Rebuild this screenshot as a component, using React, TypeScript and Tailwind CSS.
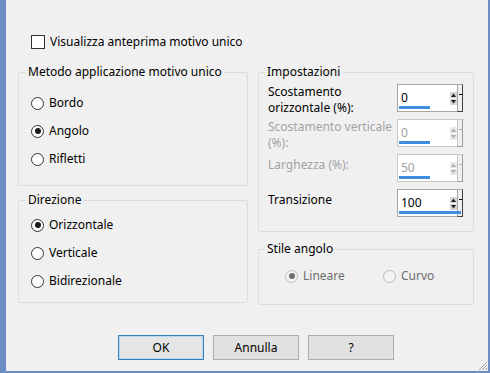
import React from 'react';

const font = { fontFamily: '"Segoe UI", "Noto Sans", Arial, sans-serif' };

const Radio: React.FC<{ label: string; checked?: boolean; disabled?: boolean }> = ({ label, checked, disabled }) => (
  <label className="flex items-center h-[16px] gap-[5px]">
    <span
      className={`w-[13px] h-[13px] rounded-full border flex items-center justify-center ${
        disabled ? 'border-[#bcbcbc] bg-[#f4f4f4]' : 'border-[#333333] bg-white'
      }`}
    >
      {checked && <span className={`w-[6px] h-[6px] rounded-full ${disabled ? 'bg-[#707070]' : 'bg-[#1a1a1a]'}`} />}
    </span>
    <span className={disabled ? 'text-[#6d6d6d]' : 'text-black'}>{label}</span>
  </label>
);

const Spin: React.FC<{ value: string; bar: number; disabled?: boolean }> = ({ value, bar, disabled }) => (
  <div className="flex h-[28px] shrink-0">
    <div className={`relative w-[53px] h-full border border-r-0 ${disabled ? 'border-[#c8c8c8]' : 'border-[#a5a5a5]'} bg-white`}>
      <span className={`absolute left-[3px] top-[5px] ${disabled ? 'text-[#a0a0a0]' : 'text-black'}`}>{value}</span>
      <span className="absolute left-[1px] bottom-[2px] h-[3px] bg-[#3d8ee0]" style={{ width: bar }} />
    </div>
    <div className={`w-[7px] h-full border-y ${disabled ? 'border-[#c8c8c8]' : 'border-[#a5a5a5]'} bg-white flex flex-col items-center justify-center gap-[1px]`}>
      <svg width="7" height="6" viewBox="0 0 7 6">
        <rect x="0" y="0" width="7" height="6" fill={disabled ? '#e8e8e8' : '#d4d4d4'} />
        <path d="M1 5 L3.5 1.5 L6 5 Z" fill={disabled ? '#b0b0b0' : '#222'} />
      </svg>
      <svg width="7" height="6" viewBox="0 0 7 6">
        <rect x="0" y="0" width="7" height="6" fill={disabled ? '#e8e8e8' : '#d4d4d4'} />
        <path d="M1 1 L3.5 4.5 L6 1 Z" fill={disabled ? '#b0b0b0' : '#222'} />
      </svg>
    </div>
    <div className={`w-[6px] h-full border ${disabled ? 'border-[#c8c8c8] border-r-[#9a9a9a] border-b-[#9a9a9a]' : 'border-[#a5a5a5] border-r-[#404040] border-b-[#404040]'} bg-[#f0f0f0] flex justify-center pt-[9px]`}>
      <span className={`w-[3px] h-[1px] ${disabled ? 'bg-[#b0b0b0]' : 'bg-black'}`} />
    </div>
  </div>
);

const App: React.FC = () => {
  return (
    <div
      className="w-[490px] h-[373px] bg-[#f0f0f0] border-l-[6px] border-r-2 border-b-2 border-[#6c8dc1] text-[12px] leading-[16px] text-black relative overflow-hidden"
      style={font}
    >
      <div className="pt-[34px] pl-[25px] flex items-center h-[50px] gap-[5px]">
        <span className="w-[14px] h-[14px] border border-[#333333] bg-white" />
        <span>Visualizza anteprima motivo unico</span>
      </div>

      <div className="flex pl-[12px] gap-[10px] mt-[14px]">
        {/* left column */}
        <div className="w-[230px] flex flex-col">
          <fieldset className="border border-[#dcdcdc] rounded-[2px] pl-[12px] pt-[15px] h-[122px]">
            <legend className="-ml-[5px] px-[2px]">Metodo applicazione motivo unico</legend>
            <div className="flex flex-col gap-[12px]">
              <Radio label="Bordo" />
              <Radio label="Angolo" checked />
              <Radio label="Rifletti" />
            </div>
          </fieldset>
          <fieldset className="border border-[#dcdcdc] rounded-[2px] pl-[12px] pt-[9px] mt-[6px] h-[111px]">
            <legend className="-ml-[5px] px-[2px]">Direzione</legend>
            <div className="flex flex-col gap-[12px]">
              <Radio label="Orizzontale" checked />
              <Radio label="Verticale" />
              <Radio label="Bidirezionale" />
            </div>
          </fieldset>
        </div>

        {/* right column */}
        <div className="w-[216px] flex flex-col">
          <fieldset className="border border-[#dcdcdc] rounded-[2px] pl-[9px] pr-[10px] pt-[4px] h-[168px]">
            <legend className="-ml-[3px] px-[2px]">Impostazioni</legend>
            <div className="flex flex-col gap-[7px]">
              <div className="flex justify-between items-start h-[28px]">
                <div className="whitespace-nowrap">
                  Scostamento<br />orizzontale (%):
                </div>
                <Spin value="0" bar={31} />
              </div>
              <div className="flex justify-between items-start h-[28px]">
                <div className="text-[#a3a3a3] whitespace-nowrap">
                  Scostamento verticale<br />(%):
                </div>
                <Spin value="0" bar={31} disabled />
              </div>
              <div className="flex justify-between items-start h-[28px]">
                <div className="mt-[3px] text-[#a3a3a3] whitespace-nowrap">Larghezza (%):</div>
                <Spin value="50" bar={31} disabled />
              </div>
              <div className="flex justify-between items-start h-[28px]">
                <div className="mt-[3px] whitespace-nowrap">Transizione</div>
                <Spin value="100" bar={62} />
              </div>
            </div>
          </fieldset>
          <fieldset className="border border-[#dcdcdc] rounded-[2px] pl-[26px] pt-[11px] mt-[9px] h-[64px]">
            <legend className="-ml-[20px] px-[2px]">Stile angolo</legend>
            <div className="flex">
              <div className="w-[98px]">
                <Radio label="Lineare" checked disabled />
              </div>
              <Radio label="Curvo" disabled />
            </div>
          </fieldset>
        </div>
      </div>

      <div className="flex gap-[9px] pl-[112px] mt-[30px]">
        <button className="w-[86px] h-[25px] border border-[#3c7fb1] bg-[#e5e5e5] shadow-[inset_0_0_0_1px_#b4d7f5]">OK</button>
        <button className="w-[86px] h-[25px] border border-[#adadad] bg-[#e1e1e1]">Annulla</button>
        <button className="w-[86px] h-[25px] border border-[#adadad] bg-[#e1e1e1]">?</button>
      </div>

      <svg className="absolute right-0 bottom-0" width="12" height="12" viewBox="0 0 12 12">
        <path d="M11 3 L3 11 M11 6 L6 11 M11 9 L9 11" stroke="#a0a0a0" strokeWidth="1" />
      </svg>
    </div>
  );
};

export default App;
